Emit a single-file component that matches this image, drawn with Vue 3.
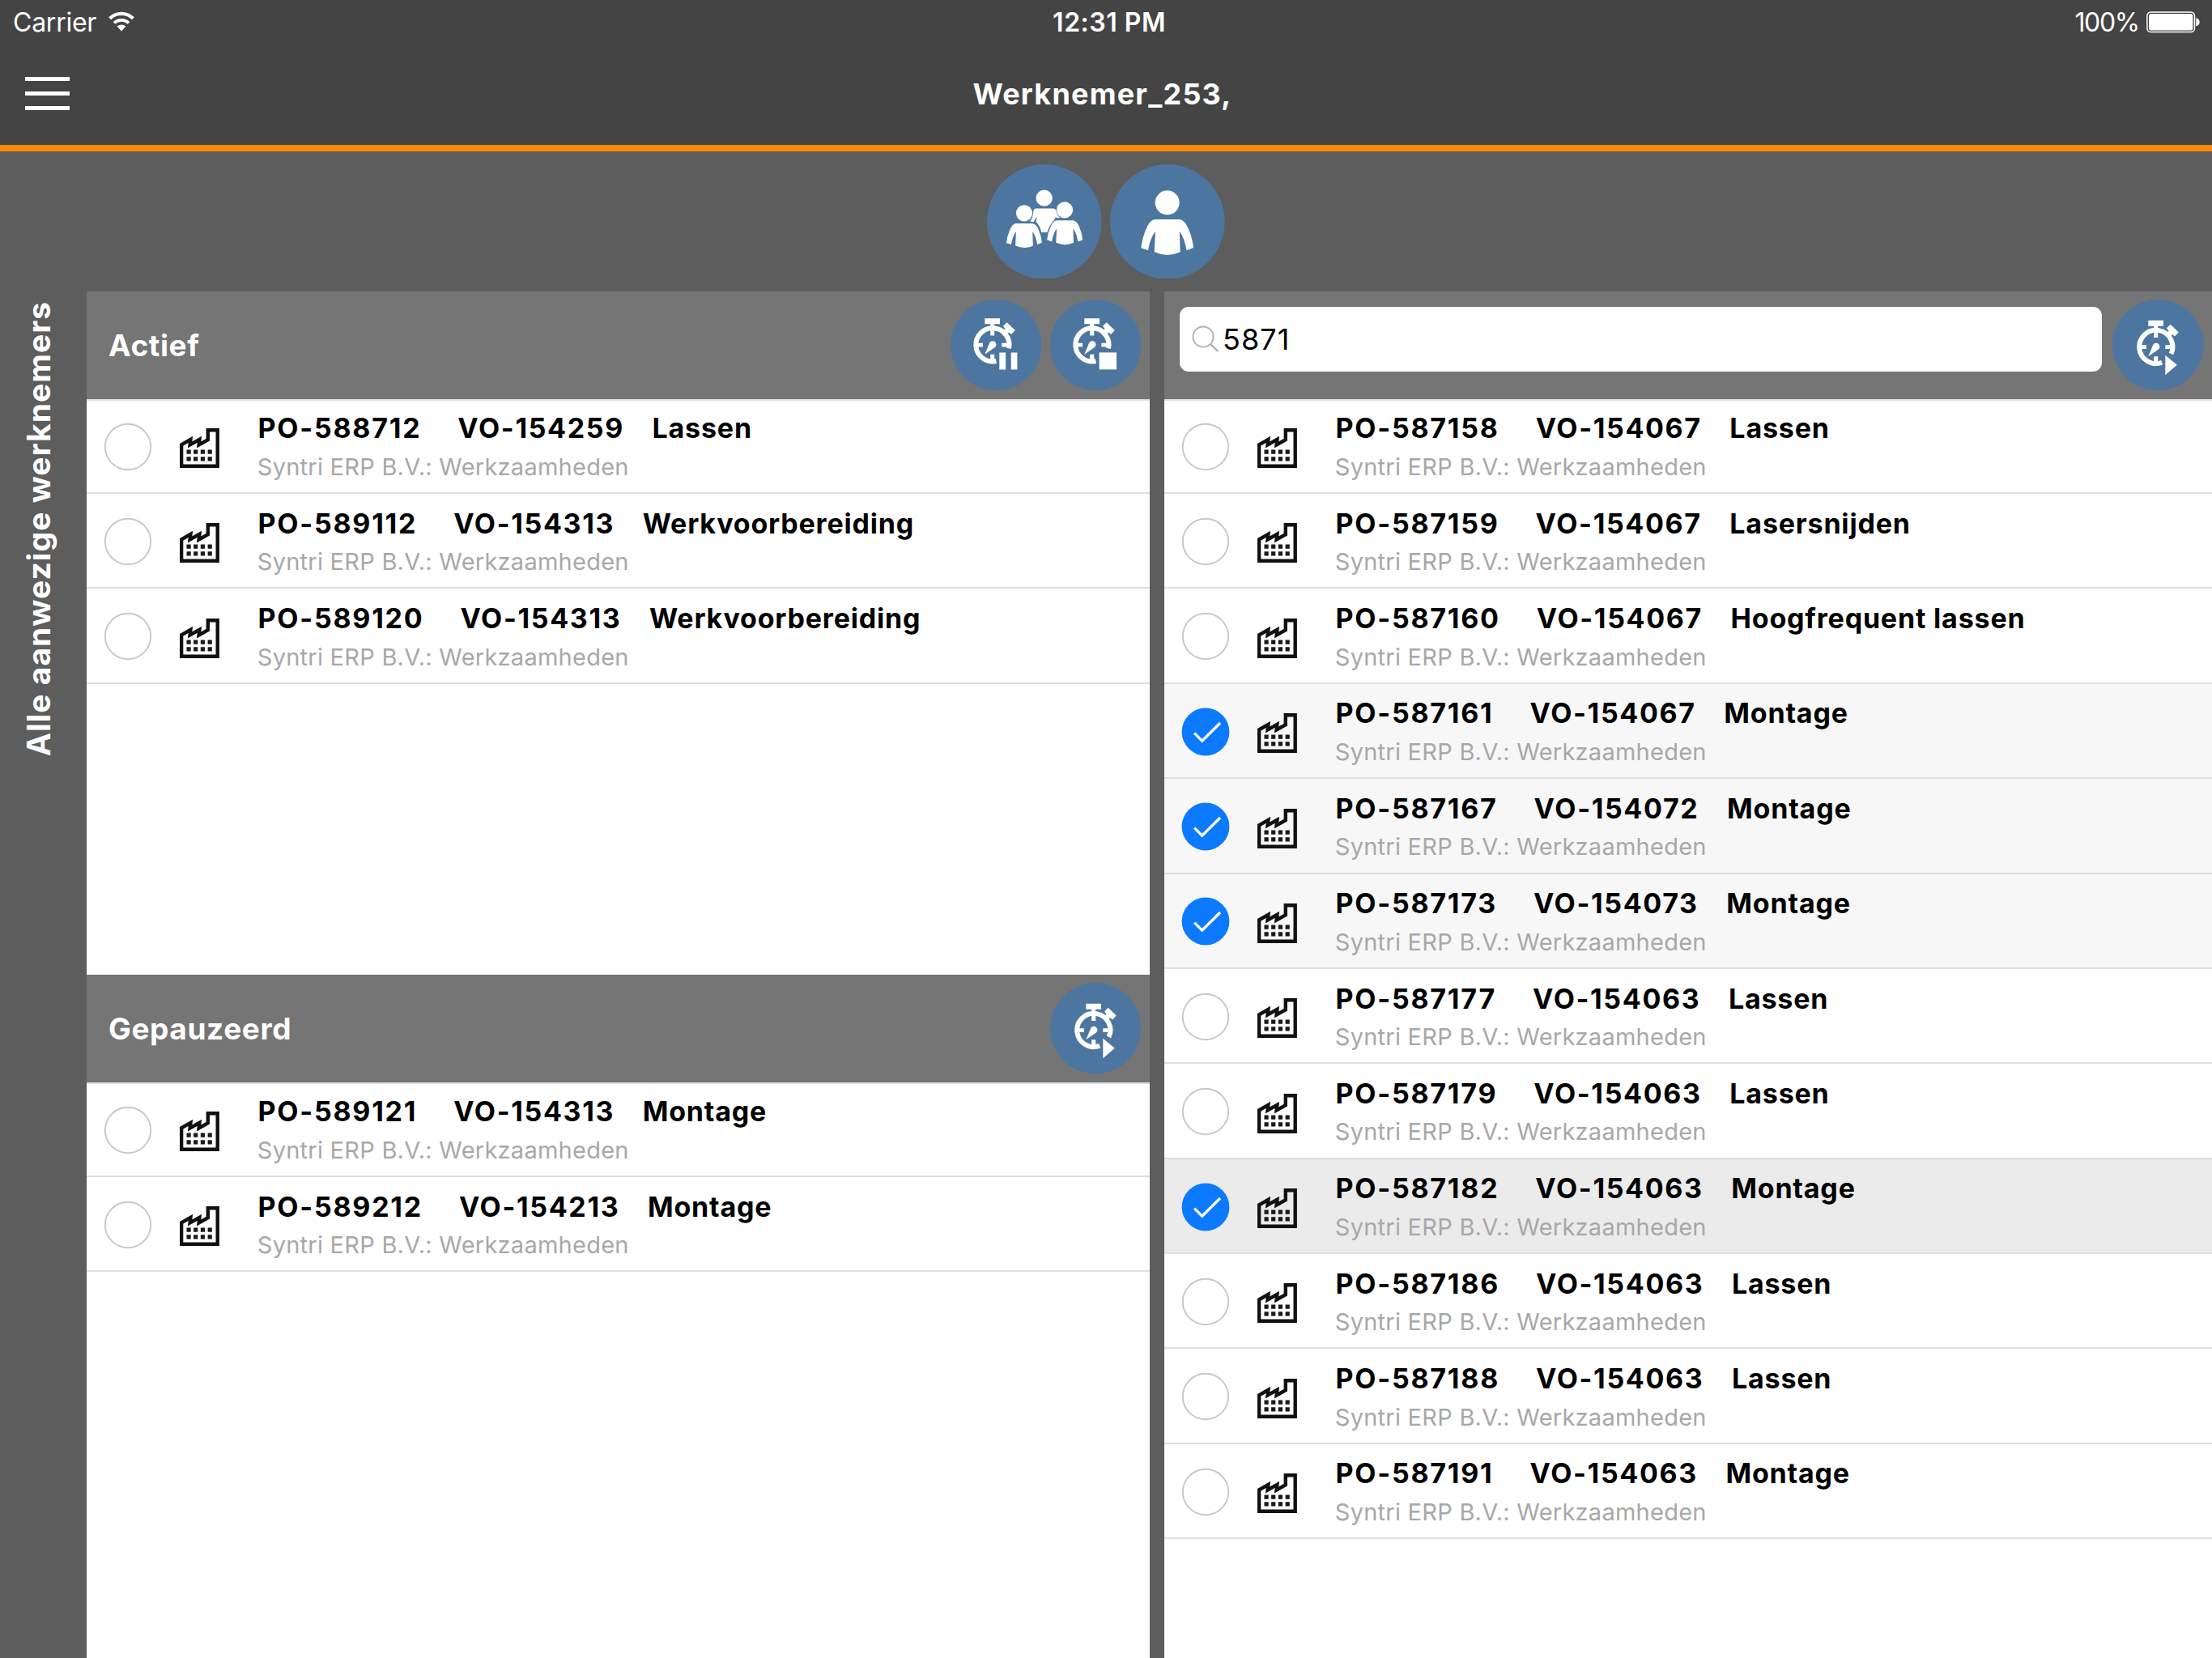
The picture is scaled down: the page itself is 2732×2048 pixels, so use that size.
<script setup>
import { h } from 'vue'

const active = [
  { po: 'PO-588712', vo: 'VO-154259', task: 'Lassen' },
  { po: 'PO-589112', vo: 'VO-154313', task: 'Werkvoorbereiding' },
  { po: 'PO-589120', vo: 'VO-154313', task: 'Werkvoorbereiding' },
]
const paused = [
  { po: 'PO-589121', vo: 'VO-154313', task: 'Montage' },
  { po: 'PO-589212', vo: 'VO-154213', task: 'Montage' },
]
const found = [
  { po: 'PO-587158', vo: 'VO-154067', task: 'Lassen' },
  { po: 'PO-587159', vo: 'VO-154067', task: 'Lasersnijden' },
  { po: 'PO-587160', vo: 'VO-154067', task: 'Hoogfrequent lassen' },
  { po: 'PO-587161', vo: 'VO-154067', task: 'Montage', state: 'on' },
  { po: 'PO-587167', vo: 'VO-154072', task: 'Montage', state: 'on' },
  { po: 'PO-587173', vo: 'VO-154073', task: 'Montage', state: 'on' },
  { po: 'PO-587177', vo: 'VO-154063', task: 'Lassen' },
  { po: 'PO-587179', vo: 'VO-154063', task: 'Lassen' },
  { po: 'PO-587182', vo: 'VO-154063', task: 'Montage', state: 'on pressed' },
  { po: 'PO-587186', vo: 'VO-154063', task: 'Lassen' },
  { po: 'PO-587188', vo: 'VO-154063', task: 'Lassen' },
  { po: 'PO-587191', vo: 'VO-154063', task: 'Montage' },
]

// Round stopwatch button: kind is 'pause', 'stop' or 'play'
const Timer = (props) => {
  const play = props.kind === 'play'
  const parts = [
    h('circle', { cx: 56.2, cy: 56.2, r: 56.2, fill: '#4c76a0' }),
    h('g', { transform: play ? 'translate(2 2.5)' : null }, [
      h('path', { d: 'M42.3 23.3H61V30.3H54.2V44.5H49.2V30.3H42.3Z' }),
      h('path', { d: 'M32 53.8H40V58.5H32ZM63.3 53.8H71V58.5H63.3ZM49.2 67.7H54.2V76H49.2Z' }),
      h('path', { d: 'M65 32.7L69.7 28.3L79.8 38L75 42.9L72 40.6L69 44L64.3 39.5L67.6 36.2Z' }),
      h('path', { d: 'M42.3 67.7L48 53.9A4.4 4.4 0 1 1 54.6 59.2Z' }),
      h('path', {
        d: play ? 'M70.5 64.6A20.6 20.6 0 1 0 59.2 75.2' : 'M72 60.4A20.6 20.6 0 1 0 56.4 76',
        fill: 'none', stroke: '#fff', 'stroke-width': 6,
      }),
    ]),
  ]
  if (play) parts.push(h('path', { d: 'M65.3 68.7L79.8 80.8L65.3 93.3Z' }))
  if (props.kind === 'pause') parts.push(h('path', { d: 'M60.3 65.4H68.1V86.4H60.3ZM74.7 65.4H82.4V86.4H74.7Z' }))
  if (props.kind === 'stop') parts.push(h('path', { d: 'M60.6 65.4H82V86.4H60.6Z' }))
  return h('svg', { viewBox: '0 0 112.4 112.4', width: 112.4, height: 112.4, fill: '#fff' }, parts)
}
Timer.props = ['kind']

const OrderList = (props) =>
  h('ul', { class: 'list' }, props.items.map((o) =>
    h('li', { class: ['row', o.state] }, [
      h('div', { class: 'inner' }, [
        h('svg', { class: 'radio', viewBox: '0 0 60 60' }, o.state
          ? [
              h('circle', { cx: 30, cy: 30, r: 29.4, fill: '#0b7aff' }),
              h('path', { d: 'M16.2 31.6L25.7 41.2L48 19', fill: 'none', stroke: '#fff', 'stroke-width': 3.4 }),
            ]
          : [h('circle', { cx: 30, cy: 30, r: 28.2, fill: '#fff', stroke: '#c7c7cc', 'stroke-width': 1.9 })]),
        h('svg', { class: 'factory', viewBox: '0 0 49 49' }, [
          h('path', { d: 'M2.1 46.8V20.4L13.4 13.8L12.6 20.4L24.4 13.8L23.6 20.4L34.8 14.2V2.2H46.7V46.8Z', fill: 'none', stroke: '#111', 'stroke-width': 4.4 }),
          h('path', { d: 'M8.5 26.5h5.2v5.2h-5.2zM17.1 26.5h5.2v5.2h-5.2zM25.8 26.5h5.2v5.2h-5.2zM34.6 26.5h5.2v5.2h-5.2zM8.5 35.2h5.2v5.2h-5.2zM17.1 35.2h5.2v5.2h-5.2zM25.8 35.2h5.2v5.2h-5.2zM34.6 35.2h5.2v5.2h-5.2z', fill: '#1a1a1a' }),
        ]),
        h('div', { class: 'info' }, [
          h('div', { class: 'title' }, [
            h('span', { class: 'po' }, o.po),
            h('span', { class: 'vo' }, o.vo),
            h('span', { class: 'task' }, o.task),
          ]),
          h('span', { class: 'sub' }, 'Syntri ERP B.V.: Werkzaamheden'),
        ]),
      ]),
    ])))
OrderList.props = ['items']
</script>

<template>
  <div class="screen">
    <header class="top">
      <div class="status">
        <div class="side">
          <span class="carrier">Carrier</span>
          <svg class="wifi" viewBox="0 0 32 25" width="32" height="25">
            <path d="M1.6 8.8A20.4 20.4 0 0 1 30.4 8.8" fill="none" stroke="#fff" stroke-width="4.2" />
            <path d="M7 14.4A13 13 0 0 1 25 14.4" fill="none" stroke="#fff" stroke-width="3.8" />
            <path d="M10.6 18.6A7.7 7.7 0 0 1 21.4 18.6L16 24.6Z" fill="#fff" />
          </svg>
        </div>
        <span class="time">12:31 PM</span>
        <div class="side end">
          <span class="percent">100%</span>
          <svg class="battery" viewBox="0 0 66 27" width="66" height="27">
            <rect x="0.9" y="0.9" width="58.6" height="24.6" rx="4.6" fill="none" stroke="#fff" stroke-width="1.5" />
            <rect x="3" y="3" width="54.4" height="20.4" rx="2.6" fill="#fff" />
            <path d="M61.3 8.2Q65.6 9 65.6 13.2T61.3 18.2Z" fill="#fff" />
          </svg>
        </div>
      </div>
      <div class="nav">
        <div class="menu"><i></i><i></i><i></i></div>
        <h1>Werknemer_253,</h1>
      </div>
    </header>

    <div class="people">
      <svg viewBox="0 0 141.6 141.6" width="141.6" height="141.6" fill="#fff">
        <defs>
          <path id="torso" d="M55 68H86Q93 69.5 97 80Q101.5 90 103 103L94.5 106.3Q92 91 85.8 82.7L86.7 108.3Q71 115.5 54.7 108.3L56 82.7Q49.5 91 47 106.3L38.3 103.3Q40 90 44.5 80Q48.5 69.5 55 68Z" />
        </defs>
        <circle cx="70.8" cy="70.8" r="70.8" fill="#4c76a0" />
        <circle cx="70.7" cy="41.7" r="10.1" />
        <path d="M60 54.5H81.5Q85 54.8 85.4 57.5Q86 62 90.2 66.6L84.5 65.6L83.2 68.6Q77.5 74.5 74.3 83.9H67.2Q65.5 75.5 60.5 71L62 64.5L57.3 71.2L53.2 70.4Q56.5 66 57.3 60Q57 55 60 54.5Z" />
        <circle cx="46" cy="60.3" r="10.1" />
        <use href="#torso" transform="translate(-2.1 26.8) scale(.68)" />
        <circle cx="96" cy="56.3" r="10.1" />
        <use href="#torso" transform="translate(48.1 23.1) scale(.68)" />
      </svg>
      <svg viewBox="0 0 141.6 141.6" width="141.6" height="141.6" fill="#fff">
        <circle cx="70.8" cy="70.8" r="70.8" fill="#4c76a0" />
        <circle cx="70.7" cy="47.3" r="15" />
        <use href="#torso" />
      </svg>
    </div>

    <main class="body">
      <aside class="rail"><span>Alle aanwezige werknemers</span></aside>

      <div class="column left">
        <section class="panel active">
          <div class="bar">
            <h2>Actief</h2>
            <Timer kind="pause" />
            <Timer kind="stop" />
          </div>
          <OrderList :items="active" />
        </section>
        <section class="panel">
          <div class="bar">
            <h2>Gepauzeerd</h2>
            <Timer kind="play" />
          </div>
          <OrderList :items="paused" />
        </section>
      </div>

      <div class="column right">
        <section class="panel">
          <div class="bar">
            <div class="search">
              <svg viewBox="0 0 34 34" width="34" height="34">
                <g fill="none" stroke="#b4b4b4" stroke-width="2">
                  <circle cx="14" cy="14" r="12.6" />
                  <path d="M23 23L32.4 32.2" stroke-width="2.4" />
                </g>
              </svg>
              <span>5871</span>
            </div>
            <Timer kind="play" />
          </div>
          <OrderList :items="found" />
        </section>
      </div>
    </main>
  </div>
</template>

<style>
body { background: #5d5d5d; }
</style>

<style scoped>
.screen {
  width: 2732px;
  height: 2048px;
  overflow: hidden;
  display: flex;
  flex-direction: column;
  background: #5d5d5d;
  color: #fff;
  font-family: Inter, "Liberation Sans", sans-serif;
}
.screen :deep(svg) { display: block; flex: none; }
.top {
  box-sizing: border-box;
  height: 187px;
  background: #444;
  border-bottom: 8px solid #ff860a;
}
.status {
  height: 54px;
  display: grid;
  grid-template-columns: 1fr auto 1fr;
  padding: 0 15px 0 16px;
  font-size: 32px;
  line-height: 56px;
}
.side { display: flex; }
.side.end { justify-content: flex-end; }
.carrier { letter-spacing: -0.25px; }
.percent { letter-spacing: -1.3px; }
.wifi { margin: 14px 0 0 15px; }
.battery { margin: 14px 0 0 9px; }
.time {
  padding-left: 7px;
  font-weight: 600;
  letter-spacing: 0.5px;
}
.nav {
  height: 125px;
  display: grid;
  grid-template-columns: 200px 1fr 209px;
}
.menu {
  display: flex;
  flex-direction: column;
  gap: 13px;
  padding: 41px 0 0 31px;
}
.menu i { width: 55px; height: 5px; background: #fff; }
h1 {
  margin: 0;
  text-align: center;
  font-size: 36px;
  font-weight: 700;
  line-height: 125px;
  letter-spacing: 1.2px;
}
.people {
  height: 173px;
  display: flex;
  align-items: center;
  justify-content: center;
  gap: 10.4px;
}
.body { flex: 1; display: flex; min-height: 0; }
.rail {
  width: 107px;
  display: flex;
  align-items: flex-start;
}
.rail span {
  writing-mode: vertical-rl;
  transform: rotate(180deg);
  font-size: 39px;
  font-weight: 700;
  line-height: 48px;
  letter-spacing: 1.03px;
  margin: 12px 0 0 24px;
}
.column { display: flex; flex-direction: column; background: #fff; }
.left { width: 1313px; margin-right: 18px; }
.right { width: 1294px; }
.active { flex: none; height: 844px; }
.bar {
  height: 133px;
  display: flex;
  align-items: center;
  gap: 10.6px;
  padding-right: 11px;
  background: #757575;
}
h2 {
  flex: 1;
  margin: 0 0 0 27px;
  font-size: 37px;
  font-weight: 700;
  letter-spacing: 0.62px;
}
.search {
  box-sizing: border-box;
  flex: 1;
  height: 80px;
  display: flex;
  align-items: center;
  margin: 0 2px 15px 19px;
  padding-left: 15px;
  border-radius: 11px;
  background: #fff;
  color: #000;
  font-size: 36px;
}
.search span { margin-left: 4px; letter-spacing: 1.1px; }
:deep(.list) {
  margin: 0;
  padding: 0;
  list-style: none;
  border-top: 2px solid #dfdfdf;
}
:deep(.row) { padding-top: 2.39px; }
:deep(.row:first-child) { padding-top: 0; }
:deep(.row.on) { background: #f7f7f7; }
:deep(.row.on.pressed) { background: #ebebeb; }
:deep(.inner) {
  box-sizing: border-box;
  height: 115px;
  display: flex;
  align-items: center;
  padding-left: 20.5px;
  border-bottom: 2px solid #dfdfdf;
}
:deep(.radio) { width: 60px; height: 60px; }
:deep(.factory) { width: 49px; height: 49px; margin: 4px 0 0 34.7px; }
:deep(.info) {
  align-self: flex-start;
  display: flex;
  flex-direction: column;
  align-items: flex-start;
  gap: 8.5px;
  margin: 13.3px 0 0 47.4px;
}
:deep(.title) {
  display: flex;
  color: #000;
  font-size: 34px;
  font-weight: 700;
  line-height: 42px;
  white-space: pre;
}
:deep(.po) { letter-spacing: 1.75px; }
:deep(.vo) { margin-left: 45px; letter-spacing: 1.65px; }
:deep(.task) { margin-left: 34.6px; letter-spacing: 0.82px; }
:deep(.sub) {
  margin-left: -0.8px;
  color: #a8a8a8;
  font-size: 29px;
  line-height: 36px;
  letter-spacing: 0.25px;
}
</style>
